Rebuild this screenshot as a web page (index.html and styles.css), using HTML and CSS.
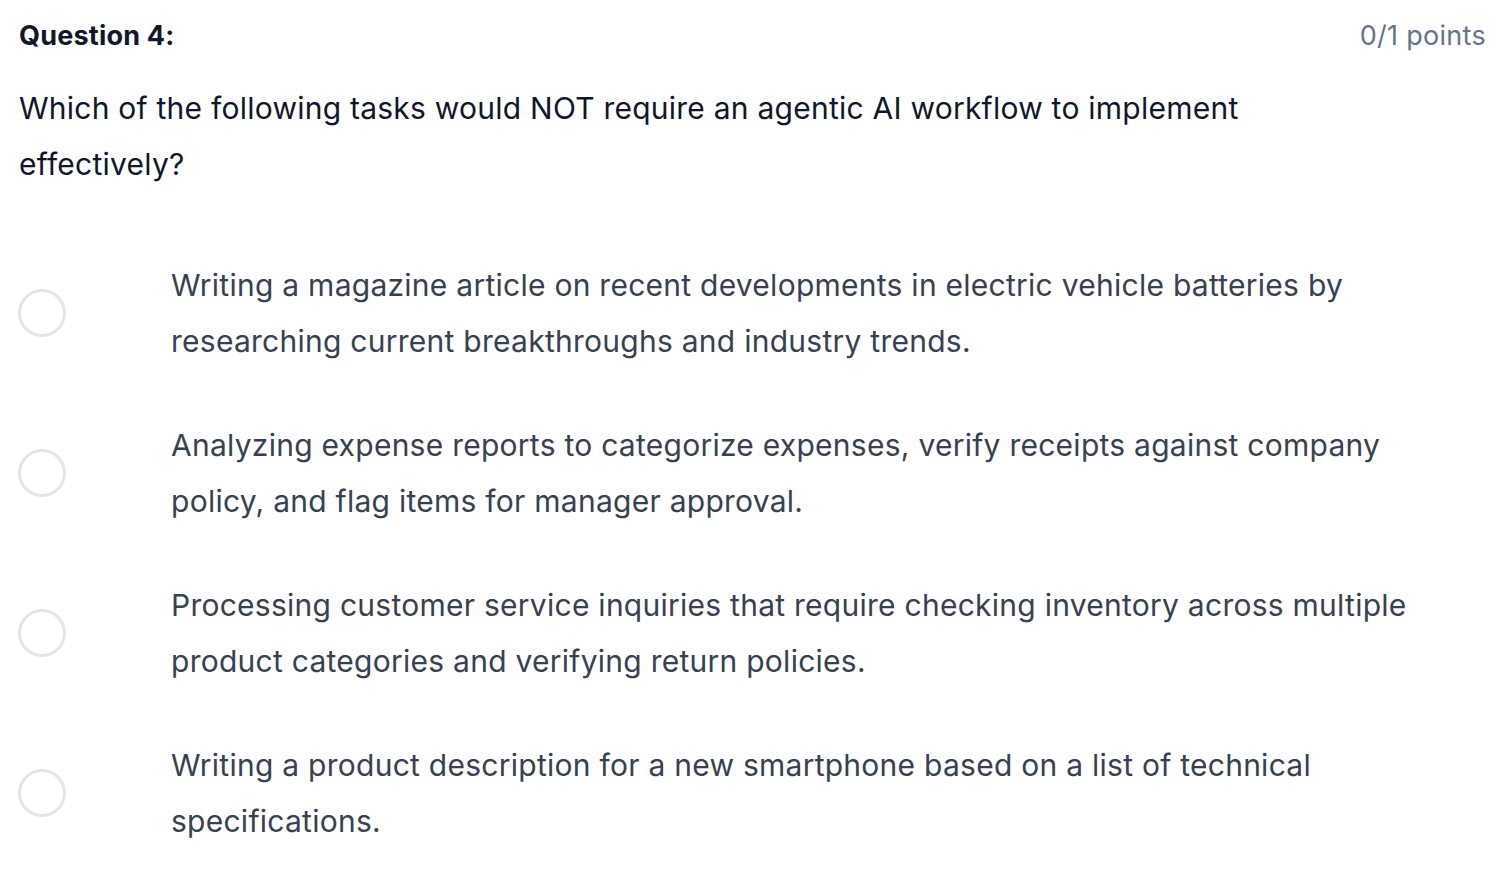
FILE: index.html
```html
<!DOCTYPE html>
<html lang="en">
<head>
<meta charset="utf-8">
<title>Question 4</title>
<link rel="stylesheet" href="styles.css">
</head>
<body>
<div class="quiz">
  <div class="header">
    <div class="q-title">Question 4:</div>
    <div class="q-points">0/1 points</div>
  </div>
  <div class="q-text">Which of the following tasks would NOT require an agentic AI workflow to implement effectively?</div>
  <div class="options">
    <label class="option"><span class="radio"></span><span class="opt-text">Writing a magazine article on recent developments in electric vehicle batteries by researching current breakthroughs and industry trends.</span></label>
    <label class="option"><span class="radio"></span><span class="opt-text">Analyzing expense reports to categorize expenses, verify receipts against company policy, and flag items for manager approval.</span></label>
    <label class="option"><span class="radio"></span><span class="opt-text">Processing customer service inquiries that require checking inventory across multiple product categories and verifying return policies.</span></label>
    <label class="option"><span class="radio"></span><span class="opt-text">Writing a product description for a new smartphone based on a list of technical specifications.</span></label>
  </div>
</div>
</body>
</html>
```
FILE: styles.css
```css
* { box-sizing: border-box; }
html, body { margin: 0; padding: 0; background: #ffffff; }
body {
  font-family: Inter, "Noto Sans", "Liberation Sans", sans-serif;
  -webkit-font-smoothing: antialiased;
}
.quiz {
  padding: 15px 18px 0 19px;
}
.header {
  display: flex;
  justify-content: space-between;
  align-items: center;
  height: 40px;
}
.q-title {
  font-size: 27px;
  font-weight: 700;
  letter-spacing: 0.2px;
  color: #0f172a;
}
.q-points {
  font-size: 27px;
  letter-spacing: 0.3px;
  color: #64748b;
}
.q-text {
  margin-top: 25px;
  font-size: 30px;
  line-height: 56px;
  letter-spacing: 0.24px;
  color: #0f172a;
  max-width: 1300px;
}
.options {
  margin-top: 65px;
  display: flex;
  flex-direction: column;
  gap: 48px;
}
.option {
  display: flex;
  align-items: center;
}
.radio {
  flex: 0 0 48px;
  width: 48px;
  height: 48px;
  border: 3px solid #e5e5e5;
  border-radius: 50%;
  margin-left: -1px;
  margin-right: 105px;
}
.opt-text {
  font-size: 30px;
  line-height: 56px;
  letter-spacing: 0.26px;
  color: #374151;
  max-width: 1270px;
}
```
